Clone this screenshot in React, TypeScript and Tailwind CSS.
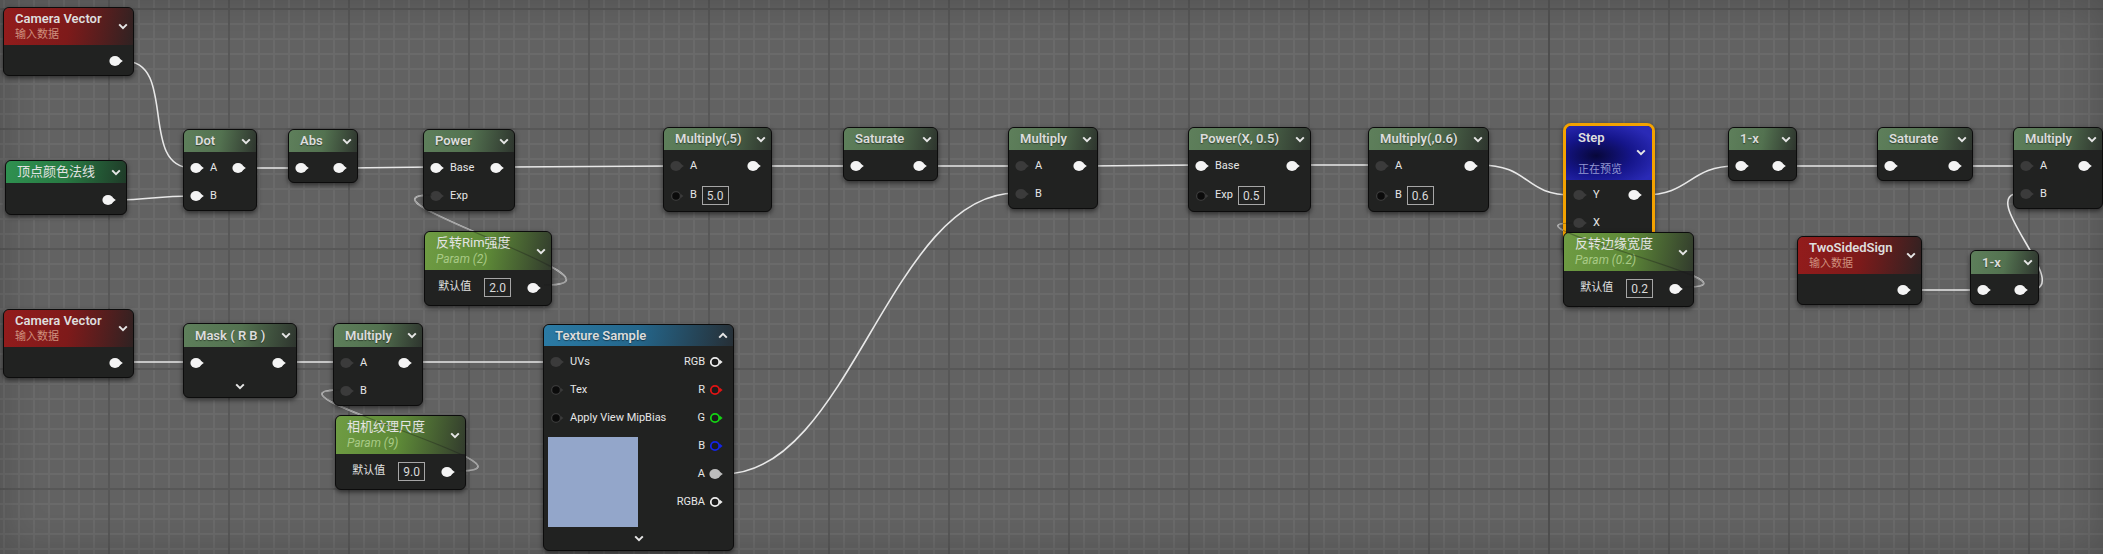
import React from 'react';

type PinKind = 'white' | 'gray' | 'hollow' | 'a' | 'rgb' | 'r' | 'g' | 'b';

const ringColors: Record<string, string> = {
  rgb: '#ececec',
  r: '#e01414',
  g: '#14d214',
  b: '#1424e6',
};

const Pin = ({ kind }: { kind: PinKind }) => {
  if (kind in ringColors) {
    const c = ringColors[kind];
    return (
      <svg width="14" height="12" viewBox="0 0 14 12" className="shrink-0">
        <circle cx="6" cy="6" r="4.2" fill="#1b1b1b" stroke={c} strokeWidth="1.8" />
        <polygon points="10.6,3.6 13.6,6 10.6,8.4" fill={c} />
      </svg>
    );
  }
  if (kind === 'hollow') {
    return (
      <svg width="14" height="12" viewBox="0 0 14 12" className="shrink-0">
        <circle cx="6" cy="6" r="4.4" fill="#0b0b0b" stroke="#3a3a3a" strokeWidth="1.3" />
        <polygon points="10.6,3.8 13.4,6 10.6,8.2" fill="#3a3a3a" />
      </svg>
    );
  }
  const fill = kind === 'white' ? '#f4f4f4' : kind === 'a' ? '#bdbdbd' : '#3b3b3b';
  return (
    <svg width="14" height="12" viewBox="0 0 14 12" className="shrink-0">
      <ellipse cx="6" cy="6" rx="5.6" ry="5" fill={fill} />
      <polygon points="10.4,3.4 13.8,6 10.4,8.6" fill={fill} />
    </svg>
  );
};

const Chevron = ({ up }: { up?: boolean }) => (
  <svg width="10" height="7" viewBox="0 0 10 7" className="shrink-0">
    <path
      d={up ? 'M1.2 5.6 L5 1.8 L8.8 5.6' : 'M1.2 1.4 L5 5.2 L8.8 1.4'}
      stroke="#e6e6e6"
      strokeWidth="2"
      fill="none"
    />
  </svg>
);

const ValueBox = ({ v }: { v: string }) => (
  <span className="ml-[5px] flex h-[19px] items-center border border-[#a6a6a6] px-[4px] text-[12px] leading-none text-[#dadada]">
    {v}
  </span>
);

type RowProps = { inPin?: PinKind; label?: string; value?: string; outPin?: PinKind; tall?: boolean };

const Row = ({ inPin, label, value, outPin, tall }: RowProps) => (
  <div className={`flex items-center pl-[6px] pr-[10px] ${tall ? 'h-[31px]' : 'h-[28px]'}`}>
    {inPin ? <Pin kind={inPin} /> : <span className="w-[14px]" />}
    {label && <span className="ml-[6px] text-[11px] text-[#e6e6e6]">{label}</span>}
    {value && <ValueBox v={value} />}
    <span className="flex-1" />
    {outPin && <Pin kind={outPin} />}
  </div>
);

const tones = {
  green: 'bg-[linear-gradient(100deg,#5e7f5b_0%,#537250_50%,#2e352e_100%)]',
  red: 'bg-[linear-gradient(100deg,#931c1c_0%,#7e1a1a_50%,#2f2222_100%)]',
  param: 'bg-[linear-gradient(100deg,#6f9c43_0%,#5d8937_50%,#323b2d_100%)]',
  vcn: 'bg-[linear-gradient(100deg,#2f9150_0%,#287a43_50%,#1f3a28_100%)]',
  blue: 'bg-[linear-gradient(100deg,#2b7ba5_0%,#24668b_50%,#262f36_100%)]',
};

const Node = ({ className, children }: { className: string; children: React.ReactNode }) => (
  <div
    className={`absolute overflow-hidden rounded-[6px] border border-[#0c0c0c] bg-[#212221] shadow-[0_2px_5px_rgba(0,0,0,0.55)] ${className}`}
  >
    {children}
  </div>
);

const Simple = ({
  className,
  title,
  tall,
  children,
}: {
  className: string;
  title: string;
  tall?: boolean;
  children: React.ReactNode;
}) => (
  <Node className={className}>
    <div className={`flex items-center justify-between pl-[11px] pr-[5px] ${tall ? 'h-[23px]' : 'h-[22px]'} ${tones.green}`}>
      <span className="text-[13px] font-semibold text-[#dcdcdc] [text-shadow:0_1px_1px_rgba(0,0,0,0.45)]">{title}</span>
      <Chevron />
    </div>
    <div className="pt-[2px]">{children}</div>
  </Node>
);

const Input = ({ className, title }: { className: string; title: string }) => (
  <Node className={className}>
    <div className={`flex h-[37px] items-center justify-between pl-[11px] pr-[5px] ${tones.red}`}>
      <div className="flex flex-col">
        <span className="text-[13px] font-semibold leading-[16px] text-[#dedede]">{title}</span>
        <span className="text-[11px] leading-[16px] text-[#cf907e]">输入数据</span>
      </div>
      <Chevron />
    </div>
    <div className="pt-[2px]">
      <Row outPin="white" />
    </div>
  </Node>
);

const Param = ({ className, title, sub, value }: { className: string; title: string; sub: string; value: string }) => (
  <Node className={className}>
    <div className={`flex h-[38px] items-center justify-between pl-[11px] pr-[5px] ${tones.param}`}>
      <div className="flex flex-col">
        <span className="text-[13px] leading-[16px] text-[#e4e4e4]">{title}</span>
        <span className="text-[12px] italic leading-[16px] text-[#a9ca86]">{sub}</span>
      </div>
      <Chevron />
    </div>
    <div className="flex h-[35px] items-center justify-end pr-[10px]">
      <span className="text-[11px] text-[#e2e2e2]">默认值</span>
      <span className="ml-[8px] flex">
        <ValueBox v={value} />
      </span>
      <span className="w-[16px]" />
      <Pin kind="white" />
    </div>
  </Node>
);

const wires = [
  'M124,61 C178,61 138,168 192,168',
  'M116,200 C150,200 155,196 192,196',
  'M246,168 L296,168',
  'M347,168 L432,167',
  'M503,167 L671,166',
  'M765,166 L852,166',
  'M928,166 L1016,166',
  'M1088,166 L1196,165',
  'M1301,165 L1374,165',
  'M1479,165 C1532,165 1522,195 1573,195',
  'M1643,195 C1692,195 1688,166 1736,166',
  'M1785,166 L1886,166',
  'M1963,166 L2021,166',
  'M1912,290 L1978,290',
  'M2029,290 C2078,290 1972,193 2021,193',
  'M124,362 L190,362',
  'M288,362 L340,362',
  'M413,362 L551,362',
  'M724,474 C850,474 890,193 1016,193',
];

const loops = [
  'M544,285 C650,285 340,195 432,195',
  'M457,471 C560,471 245,390 340,390',
  'M1684,287 C1780,287 1490,223 1573,223',
];

export default function App() {
  return (
    <div className="relative h-[554px] w-full overflow-hidden bg-[#626262] font-['Roboto','Noto_Sans_CJK_SC',sans-serif] [background-image:linear-gradient(to_right,#575757_2px,transparent_2px),linear-gradient(to_bottom,#575757_2px,transparent_2px),linear-gradient(to_right,#6a6a6a_2px,transparent_2px),linear-gradient(to_bottom,#6a6a6a_2px,transparent_2px)] [background-size:120px_120px,120px_120px,15px_15px,15px_15px] [background-position:108px_8px,108px_8px,108px_8px,108px_8px] shadow-[inset_0_0_40px_rgba(0,0,0,0.2)]">
      <div className="absolute left-[1548px] top-0 h-full w-[2px] bg-[#4e4e4e]" />

      <svg className="pointer-events-none absolute inset-0 h-full w-full">
        {[...wires, ...loops].map((d, i) => (
          <path key={i} d={d} fill="none" stroke="#e8e8e8" strokeWidth="1.6" />
        ))}
      </svg>

      {/* top chain */}
      <Input className="left-[3px] top-[7px] w-[131px]" title="Camera Vector" />

      <Node className="left-[5px] top-[160px] w-[122px]">
        <div className={`flex h-[22px] items-center justify-between pl-[11px] pr-[5px] ${tones.vcn}`}>
          <span className="text-[13px] text-[#e2e2e2]">顶点颜色法线</span>
          <Chevron />
        </div>
        <div className="pt-[3px]">
          <Row outPin="white" />
        </div>
      </Node>

      <Simple className="left-[183px] top-[129px] w-[74px]" title="Dot">
        <Row inPin="white" label="A" outPin="white" />
        <Row inPin="white" label="B" />
      </Simple>

      <Simple className="left-[288px] top-[129px] w-[70px]" title="Abs">
        <Row inPin="white" outPin="white" />
      </Simple>

      <Simple className="left-[423px] top-[129px] w-[92px]" title="Power">
        <Row inPin="white" label="Base" outPin="white" />
        <Row inPin="gray" label="Exp" />
      </Simple>

      <Param className="left-[424px] top-[231px] w-[128px]" title="反转Rim强度" sub="Param (2)" value="2.0" />

      <Simple className="left-[663px] top-[127px] w-[109px]" title="Multiply(,5)">
        <Row inPin="gray" label="A" outPin="white" />
        <Row inPin="hollow" label="B" value="5.0" tall />
      </Simple>

      <Simple className="left-[843px] top-[127px] w-[95px]" title="Saturate">
        <Row inPin="white" outPin="white" />
      </Simple>

      <Simple className="left-[1008px] top-[127px] w-[90px]" title="Multiply">
        <Row inPin="gray" label="A" outPin="white" />
        <Row inPin="gray" label="B" />
      </Simple>

      <Simple className="left-[1188px] top-[127px] w-[123px]" title="Power(X, 0.5)">
        <Row inPin="white" label="Base" outPin="white" />
        <Row inPin="hollow" label="Exp" value="0.5" tall />
      </Simple>

      <Simple className="left-[1368px] top-[127px] w-[121px]" title="Multiply(,0.6)">
        <Row inPin="gray" label="A" outPin="white" />
        <Row inPin="hollow" label="B" value="0.6" tall />
      </Simple>

      <div className="absolute left-[1563px] top-[123px] h-[132px] w-[92px] overflow-hidden rounded-[8px] border-[3px] border-[#f3a200] bg-[#212221] shadow-[0_2px_5px_rgba(0,0,0,0.55)]">
        <div className="flex h-[54px] flex-col bg-[radial-gradient(ellipse_75%_65%_at_35%_55%,#07073a_0%,#15158a_55%,#2a2ab6_100%)] pl-[12px] pr-[6px]">
          <span className="pt-[4px] text-[13px] font-semibold leading-[16px] text-[#dedede]">Step</span>
          <div className="flex h-[12px] items-center justify-end">
            <Chevron />
          </div>
          <span className="mt-[4px] text-[11px] leading-[16px] text-[#9397d0]">正在预览</span>
        </div>
        <div className="pt-[1px]">
          <div className="flex h-[28px] items-center pl-[7px] pr-[10px]">
            <Pin kind="gray" />
            <span className="ml-[6px] text-[11px] text-[#e6e6e6]">Y</span>
            <span className="flex-1" />
            <Pin kind="white" />
          </div>
          <div className="flex h-[28px] items-center pl-[7px] pr-[10px]">
            <Pin kind="gray" />
            <span className="ml-[6px] text-[11px] text-[#e6e6e6]">X</span>
          </div>
        </div>
      </div>

      <Param className="left-[1563px] top-[232px] w-[131px]" title="反转边缘宽度" sub="Param (0.2)" value="0.2" />

      <Simple className="left-[1728px] top-[127px] w-[69px]" title="1-x">
        <Row inPin="white" outPin="white" />
      </Simple>

      <Simple className="left-[1877px] top-[127px] w-[96px]" title="Saturate">
        <Row inPin="white" outPin="white" />
      </Simple>

      <Simple className="left-[2013px] top-[127px] w-[90px]" title="Multiply">
        <Row inPin="gray" label="A" outPin="white" />
        <Row inPin="gray" label="B" />
      </Simple>

      <Input className="left-[1797px] top-[236px] w-[125px]" title="TwoSidedSign" />

      <Simple className="left-[1970px] top-[250px] w-[69px]" title="1-x" tall>
        <Row inPin="white" outPin="white" />
      </Simple>

      {/* bottom chain */}
      <Input className="left-[3px] top-[309px] w-[131px]" title="Camera Vector" />

      <Simple className="left-[183px] top-[323px] w-[114px]" title="Mask ( R B )" tall>
        <Row inPin="white" outPin="white" />
        <div className="flex h-[20px] items-center justify-center pb-[2px]">
          <Chevron />
        </div>
      </Simple>

      <Simple className="left-[333px] top-[323px] w-[90px]" title="Multiply" tall>
        <Row inPin="gray" label="A" outPin="white" />
        <Row inPin="gray" label="B" />
      </Simple>

      <Param className="left-[335px] top-[415px] w-[131px]" title="相机纹理尺度" sub="Param (9)" value="9.0" />

      <Node className="left-[543px] top-[324px] w-[191px]">
        <div className={`flex h-[21px] items-center justify-between pl-[11px] pr-[5px] ${tones.blue}`}>
          <span className="text-[13px] font-semibold text-[#dcdcdc] [text-shadow:0_1px_1px_rgba(0,0,0,0.45)]">
            Texture Sample
          </span>
          <Chevron up />
        </div>
        <div className="flex justify-between pt-[2px]">
          <div className="flex flex-col">
            <Row inPin="gray" label="UVs" />
            <Row inPin="hollow" label="Tex" />
            <Row inPin="hollow" label="Apply View MipBias" />
            <div className="ml-[4px] mt-[5px] h-[90px] w-[90px] bg-[#93a6ca]" />
          </div>
          <div className="flex flex-col">
            {(
              [
                ['RGB', 'rgb'],
                ['R', 'r'],
                ['G', 'g'],
                ['B', 'b'],
                ['A', 'a'],
                ['RGBA', 'rgb'],
              ] as [string, PinKind][]
            ).map(([l, k]) => (
              <div key={l} className="flex h-[28px] items-center justify-end gap-[4px] pr-[10px]">
                <span className="text-[11px] text-[#e6e6e6]">{l}</span>
                <Pin kind={k} />
              </div>
            ))}
          </div>
        </div>
        <div className="flex h-[23px] items-center justify-center">
          <Chevron />
        </div>
      </Node>

      <svg className="pointer-events-none absolute inset-0 h-full w-full">
        {loops.map((d, i) => (
          <path key={i} d={d} fill="none" stroke="#1a1a1a" strokeOpacity="0.35" strokeWidth="1.2" />
        ))}
      </svg>
    </div>
  );
}
